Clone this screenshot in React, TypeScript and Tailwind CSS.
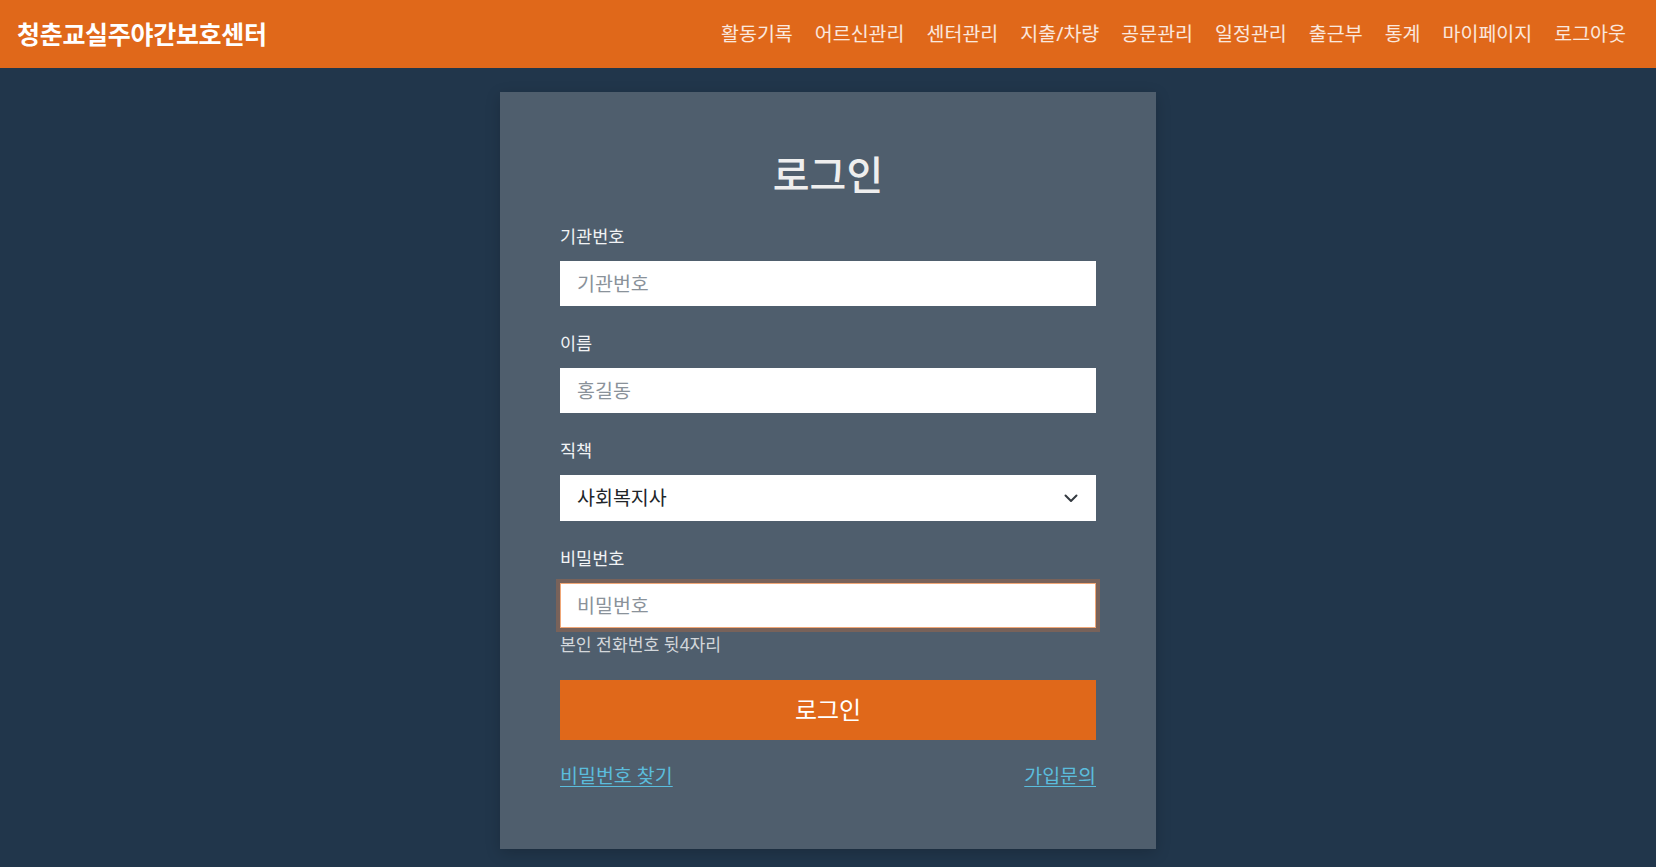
const menus = ["활동기록", "어르신관리", "센터관리", "지출/차량", "공문관리", "일정관리", "출근부", "통계", "마이페이지", "로그아웃"];

function Header() {
  return (
    <header className="flex h-[68px] items-center justify-between bg-[#e0681a] pl-[17px] pr-[30px]">
      <a href="#" className="text-[25px] font-bold leading-none tracking-[-0.3px] text-white">
        청춘교실주야간보호센터
      </a>
      <nav className="flex items-center gap-[22px]">
        {menus.map((m) => (
          <a key={m} href="#" className="text-[19.5px] leading-none text-white/85">
            {m}
          </a>
        ))}
      </nav>
    </header>
  );
}

function Field({ label, placeholder }: { label: string; placeholder: string }) {
  return (
    <div className="mb-[25px]">
      <label className="mb-[13px] block text-[17.5px] leading-[24px] text-[#f1f3f5]">{label}</label>
      <input
        type="text"
        placeholder={placeholder}
        className="block h-[45px] w-full border border-white bg-white px-4 text-[19.5px] text-[#212529] outline-none placeholder:text-[#8a929a]"
      />
    </div>
  );
}

export default function App() {
  return (
    <div
      className="min-h-screen bg-[#21364b]"
      style={{ fontFamily: '"Noto Sans", "Noto Sans CJK KR", sans-serif' }}
    >
      <Header />
      <main className="flex justify-center pt-[24px] pb-[18px]">
        <div className="w-[656px] bg-[#4f5e6d] px-[60px] pt-[61px] pb-[60px] shadow-[0_4px_14px_rgba(0,0,0,0.18)]">
          <h2 className="mb-[28px] text-center text-[40px] font-medium leading-[43px] text-[#eeeeee]">로그인</h2>

          <Field label="기관번호" placeholder="기관번호" />
          <Field label="이름" placeholder="홍길동" />

          <div className="mb-[25px]">
            <label className="mb-[13px] block text-[17.5px] leading-[24px] text-[#f1f3f5]">직책</label>
            <div className="relative">
              <select
                defaultValue="사회복지사"
                className="block h-[46px] w-full appearance-none rounded-none border border-white bg-white px-4 text-[19.5px] text-[#212529] outline-none"
              >
                <option>사회복지사</option>
                <option>요양보호사</option>
                <option>센터장</option>
              </select>
              <svg
                className="pointer-events-none absolute right-[17px] top-1/2 h-[16px] w-[16px] -translate-y-1/2"
                viewBox="0 0 16 16"
                fill="none"
                stroke="#343a40"
                strokeWidth="2"
                strokeLinecap="round"
                strokeLinejoin="round"
              >
                <path d="M2.5 5.5l5.5 5.5 5.5-5.5" />
              </svg>
            </div>
          </div>

          <div>
            <label className="mb-[13px] block text-[17.5px] leading-[24px] text-[#f1f3f5]">비밀번호</label>
            <input
              type="password"
              placeholder="비밀번호"
              className="block h-[45px] w-full border border-[#f0a777] bg-white px-4 text-[19.5px] text-[#212529] shadow-[0_0_0_4px_#78625a] outline-none placeholder:text-[#8a929a]"
            />
            <p className="mt-[5px] text-[17.2px] leading-[24px] text-[#d3d7db]">본인 전화번호 뒷4자리</p>
          </div>

          <button
            type="button"
            className="mt-[23px] block h-[60px] w-full bg-[#e0681a] text-[24px] text-white"
          >
            로그인
          </button>

          <div className="mt-[22px] flex items-center justify-between text-[19.5px] leading-[27px]">
            <a href="#" className="text-[#5bbcdc] underline underline-offset-[3px]">
              비밀번호 찾기
            </a>
            <a href="#" className="text-[#5bbcdc] underline underline-offset-[3px]">
              가입문의
            </a>
          </div>
        </div>
      </main>
    </div>
  );
}
